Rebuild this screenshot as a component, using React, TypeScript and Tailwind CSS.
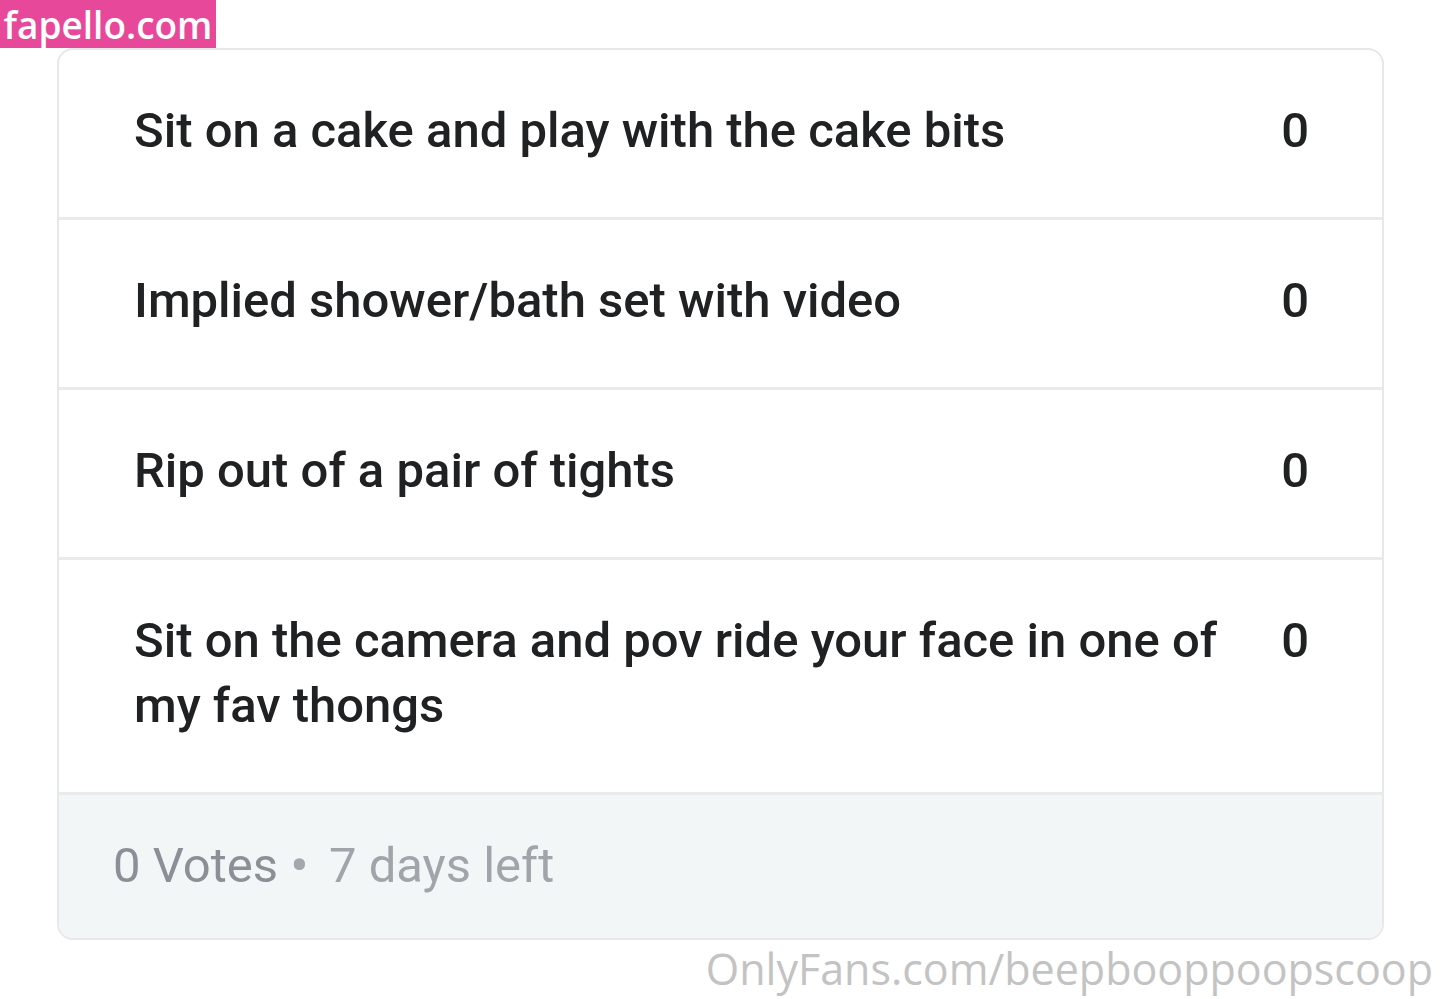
const options = [
  { label: 'Sit on a cake and play with the cake bits', votes: 0 },
  { label: 'Implied shower/bath set with video', votes: 0 },
  { label: 'Rip out of a pair of tights', votes: 0 },
  { label: 'Sit on the camera and pov ride your face in one of my fav thongs', votes: 0 },
]

export default function App() {
  return (
    <div className="relative min-h-[999px] w-[1440px] bg-white font-['Roboto',sans-serif]">
      <div className="absolute left-0 top-0 z-10 flex h-[48px] w-[216px] items-center justify-center bg-[#e8489a] font-['Open_Sans',sans-serif] text-[37px] font-semibold leading-none text-white">
        fapello.com
      </div>

      <div className="pl-[57px] pt-[48px]">
        <div className="w-[1327px] overflow-hidden rounded-[16px] border-2 border-[#e6e8e9] bg-white">
          {options.map((option, i) => (
            <div
              key={i}
              className="flex items-start justify-between gap-[48px] border-b-[3px] border-[#e8eaeb] pb-[54px] pl-[75px] pr-[73px] pt-[48px]"
            >
              <div className="text-[49px] font-medium leading-[65px] text-[#202123]">{option.label}</div>
              <div className="text-[49px] font-medium leading-[65px] text-[#202123]">{option.votes}</div>
            </div>
          ))}
          <div className="flex h-[143px] items-center bg-[#f2f6f7] pb-[2px] pl-[54px] text-[49px] leading-none">
            <span className="text-[#8b9096]">0 Votes</span>
            <span className="ml-[12px] mr-[20px] text-[56px] text-[#a3a8ac]">•</span>
            <span className="text-[#a0a5aa]">7 days left</span>
          </div>
        </div>
      </div>

      <div className="absolute right-[7px] top-[941px] font-['Open_Sans',sans-serif] text-[43px] leading-[56px] text-[#c3c3c3]">
        OnlyFans.com/beepbooppoopscoop
      </div>
    </div>
  )
}
